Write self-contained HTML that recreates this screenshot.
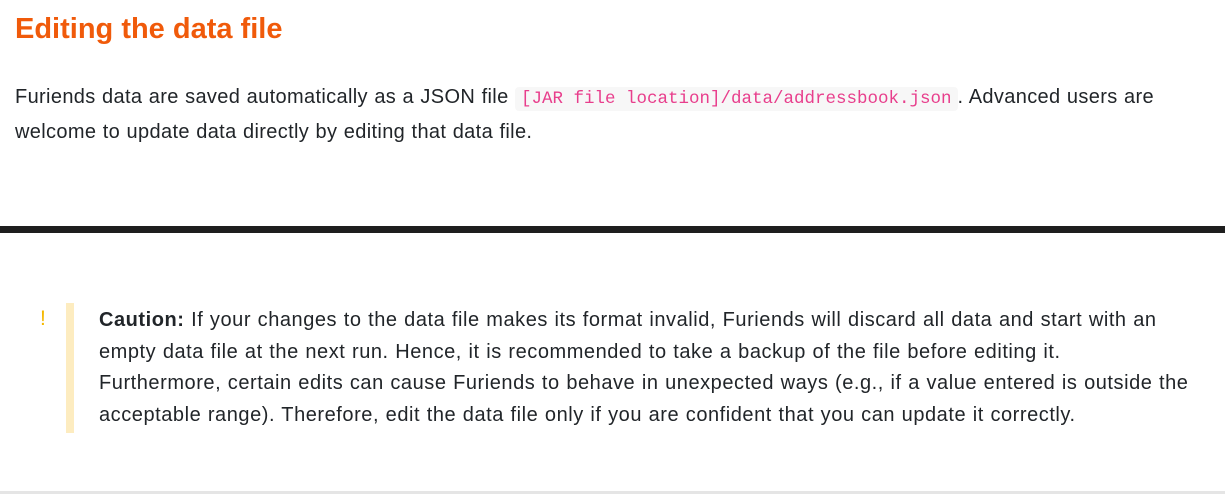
<!DOCTYPE html>
<html><head><meta charset="utf-8"><style>
body{margin:0;background:#fff;font-family:"Liberation Sans",sans-serif;color:#212529;width:1225px;height:497px;overflow:hidden;position:relative}
h1{position:absolute;left:15px;top:13px;margin:0;font-size:29px;font-weight:bold;color:#f05a0a;letter-spacing:0px}
.p{position:absolute;left:15px;top:81px;white-space:nowrap;font-size:20px;line-height:33px;letter-spacing:0.35px;word-spacing:0.5px}
code{font-family:"Liberation Mono",monospace;font-size:17.5px;color:#e83e8c;background:#f7f7f7;padding:2px 6px;border-radius:4px;letter-spacing:0;word-spacing:0}
.bar{position:absolute;left:0;top:226px;width:1225px;height:7px;background:#1e1e1e}
.ex{position:absolute;left:40px;top:307px;color:#f5b800;font-size:21px}
.vb{position:absolute;left:66px;top:303px;width:8px;height:130px;background:#fdecc0}
.c{position:absolute;left:99px;top:305px;white-space:nowrap;font-size:20px;line-height:31.5px;letter-spacing:0.55px;word-spacing:0.5px}
.bl{position:absolute;left:0;top:491px;width:1225px;height:3px;background:#e5e5e5}
</style></head><body>
<h1>Editing the data file</h1>
<div class="p">Furiends data are saved automatically as a JSON file <code>[JAR file location]/data/addressbook.json</code>. Advanced users are<br>welcome to update data directly by editing that data file.</div>
<div class="bar"></div>
<div class="ex">!</div>
<div class="vb"></div>
<div class="c"><b>Caution:</b> If your changes to the data file makes its format invalid, Furiends will discard all data and start with an<br>empty data file at the next run. Hence, it is recommended to take a backup of the file before editing it.<br>Furthermore, certain edits can cause Furiends to behave in unexpected ways (e.g., if a value entered is outside the<br>acceptable range). Therefore, edit the data file only if you are confident that you can update it correctly.</div>
<div class="bl"></div>
</body></html>
